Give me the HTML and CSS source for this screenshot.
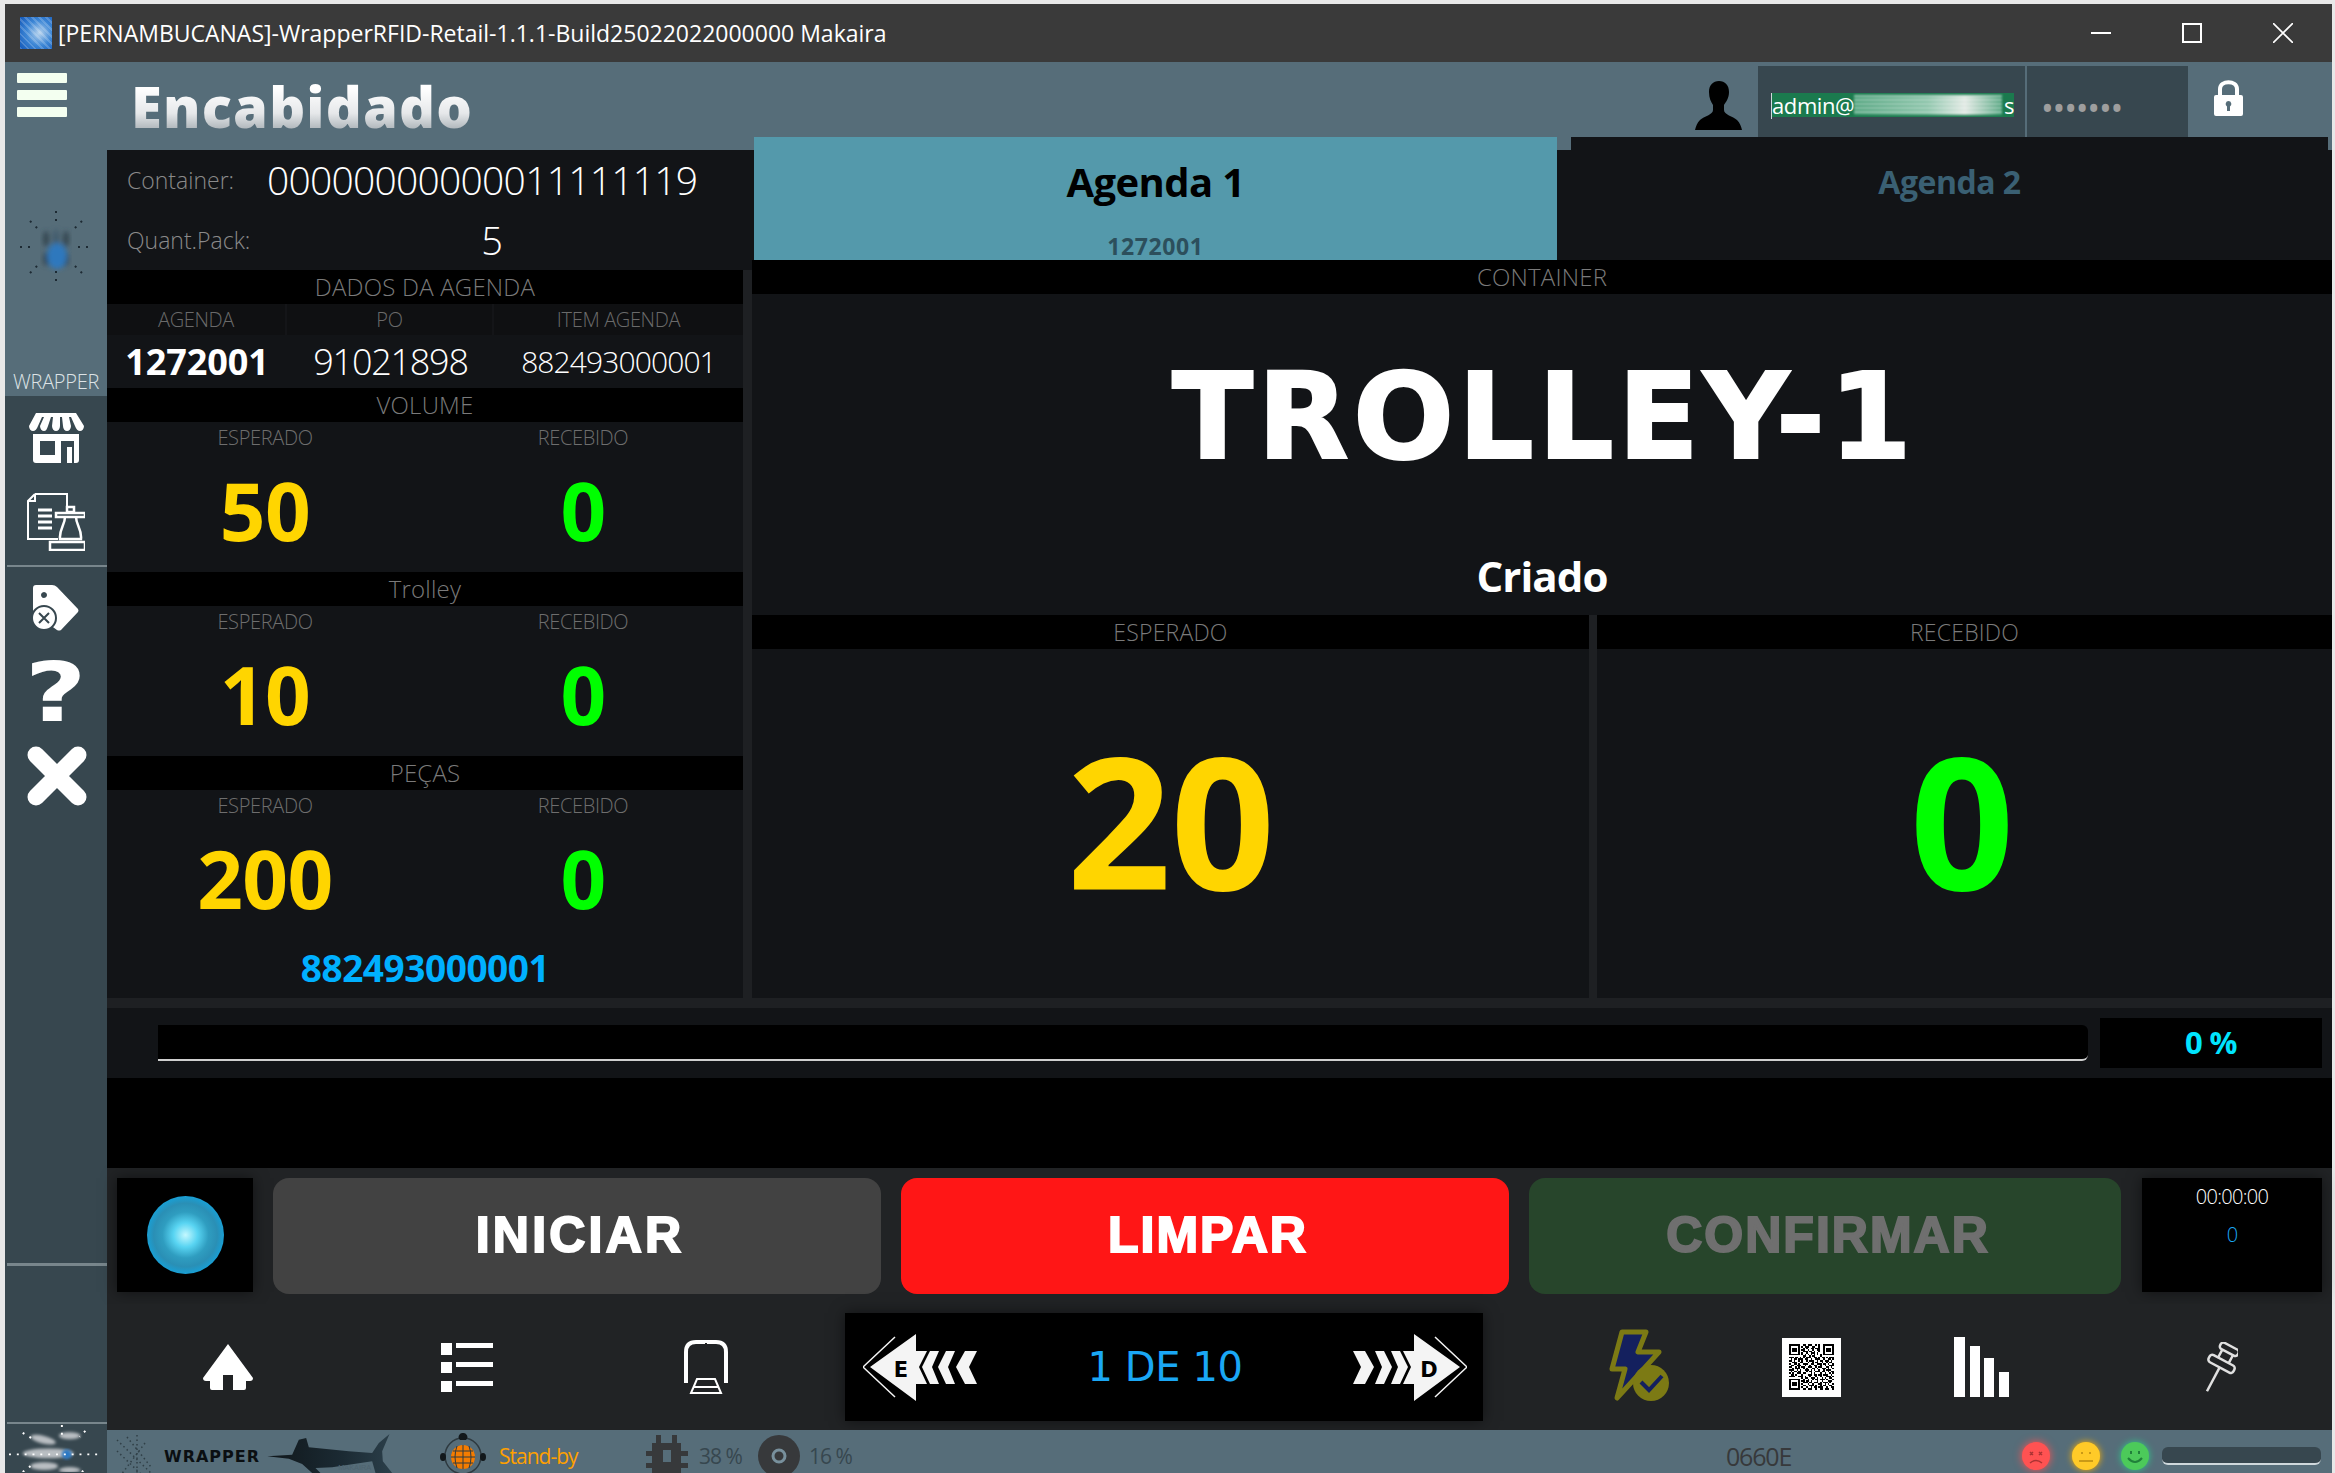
FILE: index.html
```html
<!DOCTYPE html>
<html lang="en">

<head>
    <meta charset="UTF-8">
    <title>[PERNAMBUCANAS]-WrapperRFID-Retail-1.1.1-Build25022022000000 Makaira</title>
    <link rel="stylesheet" href="styles.css">
</head>

<body>
    <div class="window">
        <header class="titlebar">
            <span class="app-icon"></span>
            <span class="title-text">[PERNAMBUCANAS]-WrapperRFID-Retail-1.1.1-Build25022022000000 Makaira</span>
            <div class="win-controls">
                <svg viewBox="0 0 20 20" width="20" height="20"><path d="M0 10h20" stroke="#fff" stroke-width="2"/></svg>
                <svg viewBox="0 0 20 20" width="20" height="20"><rect x="1" y="1" width="18" height="18" fill="none" stroke="#fff" stroke-width="2"/></svg>
                <svg viewBox="0 0 20 20" width="20" height="20"><path d="M0 0l20 20M20 0L0 20" stroke="#fff" stroke-width="1.6"/></svg>
            </div>
        </header>

        <div class="app">
            <aside class="sidebar">
                <div class="side-top">
                    <div class="burger"><span></span><span></span><span></span></div>
                    <svg class="side-logo" viewBox="-40 -40 80 80" width="80" height="80">
                        <defs>
                            <filter id="logoBlur"><feGaussianBlur stdDeviation="2.5"/></filter>
                        </defs>
                        <g filter="url(#logoBlur)">
                            <ellipse cx="-10" cy="-8" rx="3" ry="8" fill="#33454f"/>
                            <ellipse cx="10" cy="-8" rx="3" ry="8" fill="#33454f"/>
                            <ellipse cx="-10" cy="12" rx="3" ry="7" fill="#33454f"/>
                            <ellipse cx="10" cy="12" rx="3" ry="7" fill="#33454f"/>
                            <ellipse cx="0" cy="-8" rx="3" ry="10" fill="#3f5a6c"/>
                            <ellipse cx="1" cy="9" rx="10" ry="13" fill="#2f78bd"/>
                        </g>
                        <g stroke="#1d2a33" stroke-width="2" stroke-dasharray="2 6" fill="none">
                            <path d="M0-36V-22M0 24V36M-36 0H-22M22 0H36M-26-26L-18-18M26-26L18-18M-26 26L-18 18M26 26L18 18"/>
                        </g>
                    </svg>
                    <div class="side-label">WRAPPER</div>
                </div>
                <div class="side-bottom">
                    <svg class="icon-store" viewBox="0 0 56 50" width="56" height="50">
                        <path fill="#fff" d="M8 0h40l8 13c0 3-2 5-4 5s-4-2-5-5l-4-9h-2l2 9c0 3-2 5-4 5s-4-2-4-5l-1-9h-2v9c0 3-2 5-4 5s-4-2-4-5l1-9h-2l-3 9c-1 3-2 5-4 5s-4-2-4-5l4-9h-2l-4 9c-1 3-3 5-5 5s-4-2-4-5z"/>
                        <path fill="#fff" fill-rule="evenodd" d="M5 21h46v26q0 3-3 3H8q-3 0-3-3zM12 28v14h15V28zM33 28v22h6V34h5v16h2V28z"/>
                    </svg>
                    <svg class="icon-doc" viewBox="0 0 58 58" width="58" height="58" fill="none" stroke="#fff" stroke-width="2">
                        <path d="M8 1h32v14M8 1L1 8v38h30M1 8h7V1"/>
                        <path stroke-width="3" d="M11 17h14M11 23h14M11 29h14M11 35h14"/>
                        <path stroke-width="2.5" d="M40 14h7v5h-7zM29 20h29v4H29zM38 24h11c0 8 6 12 5 22H33c-1-10 5-14 5-22zM23 49h35v8H23z"/>
                    </svg>
                    <hr class="side-rule side-rule-a">
                    <svg class="icon-tag" viewBox="0 0 46 46" width="46" height="46">
                        <path fill="#fff" fill-rule="evenodd" d="M3 0h16q3 0 5 2l21 22q1 2 0 3L28 45q-2 1-4 0L3 30q-3-2-3-5V3q0-3 3-3zM11 7a3 3 0 1 0 .01 0z"/>
                        <circle cx="11" cy="33" r="12" fill="#fff" stroke="#37474f" stroke-width="2"/>
                        <path d="M6 28l10 10M16 28L6 38" stroke="#37474f" stroke-width="2"/>
                    </svg>
                    <div class="icon-help">?</div>
                    <svg class="icon-close" viewBox="0 0 60 60" width="60" height="60"><path d="M9 9l42 42M51 9L9 51" stroke="#fff" stroke-width="17" stroke-linecap="round"/></svg>
                    <hr class="side-rule side-rule-b">
                    <hr class="side-rule side-rule-c">
                    <svg class="side-logo-small" viewBox="-50 -24 100 48" width="102" height="47">
                        <defs>
                            <filter id="soft"><feGaussianBlur stdDeviation="1.6"/></filter>
                        </defs>
                        <g fill="#b9bec2" filter="url(#soft)">
                            <ellipse cx="-8" cy="5" rx="26" ry="5"/>
                            <ellipse cx="-13" cy="-9" rx="13" ry="4" transform="rotate(14 -13 -9)"/>
                            <ellipse cx="14" cy="-13" rx="11" ry="3.500"/>
                            <ellipse cx="-12" cy="18" rx="14" ry="4"/>
                            <ellipse cx="14" cy="22" rx="11" ry="3"/>
                        </g>
                        <circle cx="11" cy="6" r="5" fill="#2a78c4" filter="url(#soft)"/>
                        <g stroke="#fff" stroke-width="2" stroke-dasharray="2 6" fill="none">
                            <path d="M-48 6H48M6-24V-14M-34-16L-24-10M30-18L24-12M-34 24L-26 18M28 24L22 20"/>
                        </g>
                    </svg>
                </div>
            </aside>

            <div class="workspace">
                <div class="head-bar">
                    <h1 class="head-title">Encabidado</h1>
                    <svg class="icon-user" viewBox="0 0 47 49" width="47" height="49">
                        <path d="M24 0c6 0 10 4 10 11 0 6-3 10-5 13v5c0 5 9 6 13 10 3 3 4 6 5 10H0c1-4 2-7 5-10 4-4 13-5 13-10v-5c-2-3-4-7-4-13C14 4 18 0 24 0z"/>
                    </svg>
                    <div class="login-box login-user">
                        <span class="caret"></span><span class="selected">admin@<span class="smudge"></span>s</span>
                    </div>
                    <div class="login-box login-pass">•••••••</div>
                    <svg class="icon-lock" viewBox="0 0 29 36" width="29" height="36">
                        <path fill="none" stroke="#fff" stroke-width="4" d="M6 17V9c0-9 17-9 17 0v8"/>
                        <path fill="#fff" fill-rule="evenodd" d="M2 15h25q2 0 2 2v17q0 2-2 2H2q-2 0-2-2V17q0-2 2-2zM14.500 21a3 3 0 0 0-1.500 5.500V31h3v-4.500A3 3 0 0 0 14.500 21z"/>
                    </svg>
                </div>

                <div class="content">
                    <section class="left-panel">
                        <div class="info-row">
                            <span class="info-label">Container:</span>
                            <span class="info-code">00000000000011111119</span>
                        </div>
                        <div class="info-row">
                            <span class="info-label">Quant.Pack:</span>
                            <span class="info-qty">5</span>
                        </div>

                        <div class="band">DADOS DA AGENDA</div>
                        <div class="agenda-grid">
                            <div class="agenda-head">AGENDA</div>
                            <div class="agenda-head">PO</div>
                            <div class="agenda-head">ITEM AGENDA</div>
                            <div class="agenda-val agenda-strong">1272001</div>
                            <div class="agenda-val">91021898</div>
                            <div class="agenda-val agenda-small">882493000001</div>
                        </div>

                        <div class="band">VOLUME</div>
                        <div class="stats">
                            <div class="stat-label">ESPERADO</div>
                            <div class="stat-label">RECEBIDO</div>
                            <div class="stat-val yellow">50</div>
                            <div class="stat-val green">0</div>
                        </div>

                        <div class="band">Trolley</div>
                        <div class="stats">
                            <div class="stat-label">ESPERADO</div>
                            <div class="stat-label">RECEBIDO</div>
                            <div class="stat-val yellow">10</div>
                            <div class="stat-val green">0</div>
                        </div>

                        <div class="band">PEÇAS</div>
                        <div class="stats">
                            <div class="stat-label">ESPERADO</div>
                            <div class="stat-label">RECEBIDO</div>
                            <div class="stat-val yellow">200</div>
                            <div class="stat-val green">0</div>
                        </div>
                        <div class="item-code">882493000001</div>
                    </section>

                    <section class="right-panel">
                        <div class="tabs">
                            <div class="tab tab-active">
                                <div class="tab-name">Agenda 1</div>
                                <div class="tab-sub">1272001</div>
                            </div>
                            <div class="tab tab-idle">
                                <div class="tab-name">Agenda 2</div>
                            </div>
                        </div>
                        <div class="band">CONTAINER</div>
                        <div class="trolley">
                            <div class="trolley-name">TROLLEY-1</div>
                            <div class="trolley-state">Criado</div>
                        </div>
                        <div class="totals">
                            <div class="total">
                                <div class="band">ESPERADO</div>
                                <div class="total-val yellow">20</div>
                            </div>
                            <div class="total">
                                <div class="band">RECEBIDO</div>
                                <div class="total-val green">0</div>
                            </div>
                        </div>
                    </section>
                </div>

                <div class="progress-row">
                    <div class="progress-bar"></div>
                    <div class="progress-pct">0 %</div>
                </div>
                <div class="black-gap"></div>

                <div class="actions">
                    <div class="orb-box"><span class="orb"></span></div>
                    <button class="action action-start">INICIAR</button>
                    <button class="action action-clear">LIMPAR</button>
                    <button class="action action-confirm">CONFIRMAR</button>
                    <div class="timer">
                        <div class="timer-time">00:00:00</div>
                        <div class="timer-count">0</div>
                    </div>
                </div>

                <nav class="nav">
                    <svg class="nav-home" viewBox="0 0 50 46" width="50" height="46">
                        <path fill="#fff" d="M25 0l25 34q0 3-3 3h-4v7q0 2-2 2H30V31H20v15H9q-2 0-2-2v-7H3q-3 0-3-3z"/>
                    </svg>
                    <svg class="nav-list" viewBox="0 0 52 49" width="52" height="49" fill="#fff">
                        <path d="M0 0h11v12H0zM0 19h11v11H0zM0 38h11v11H0zM15 0h37v5H15zM15 19h37v5H15zM15 38h37v5H15z"/>
                    </svg>
                    <svg class="nav-reader" viewBox="0 0 44 54" width="44" height="54" fill="none" stroke="#fff">
                        <path stroke-width="4" d="M2 43V12q0-10 10-10h20q10 0 10 10v31"/>
                        <path stroke-width="2" d="M7 53h30l-6-14H13zM10 47h24"/>
                        <path stroke-width="2" d="M22 3v2" stroke="#212325"/>
                    </svg>
                    <div class="pager">
                        <svg class="arrow" viewBox="0 0 114 67" width="114" height="67">
                            <defs>
                                <g id="arrowShape" fill="#f4f4f4">
                                    <path d="M7 33L53 0v17h11l-8 16 8 17H53v17z"/>
                                    <path d="M0 33L32 3M0 33l32 30" stroke="#f4f4f4" stroke-width="1.500" fill="none"/>
                                    <path d="M67 17h9l-7 16 7 17h-9l-8-17z"/>
                                    <path d="M83 17h9l-7 16 7 17h-9l-8-17z"/>
                                    <path d="M102 17h12l-8 16 8 17h-12l-9-17z"/>
                                </g>
                            </defs>
                            <use href="#arrowShape"/>
                            <text x="38" y="43" text-anchor="middle" class="arrow-letter">E</text>
                        </svg>
                        <span class="pager-text">1 DE 10</span>
                        <svg class="arrow" viewBox="0 0 114 67" width="114" height="67">
                            <use href="#arrowShape" transform="translate(114 0) scale(-1 1)"/>
                            <text x="76" y="43" text-anchor="middle" class="arrow-letter">D</text>
                        </svg>
                    </div>
                    <svg class="nav-bolt" viewBox="0 0 70 80" width="70" height="80">
                        <path fill="#14205e" stroke="#7c7a14" stroke-width="5" stroke-linejoin="round" d="M16 5h24l-8 20h21L33 47l-22 24 8-29H6z"/>
                        <circle cx="45" cy="56" r="18" fill="#7c7a14"/>
                        <path d="M35 55l8 8 13-14" fill="none" stroke="#14205e" stroke-width="4"/>
                    </svg>
                    <svg class="nav-qr" viewBox="0 0 38 38" width="59" height="60" shape-rendering="crispEdges">
                        <rect width="38" height="38" fill="#fff"/>
                        <g transform="translate(4.500 4.500)" fill="none" stroke="#000">
                            <rect x=".5" y=".5" width="6" height="6"/>
                            <rect x="22.500" y=".5" width="6" height="6"/>
                            <rect x=".5" y="22.500" width="6" height="6"/>
                            <g fill="#000">
                                <rect x="2.500" y="2.500" width="2" height="2"/>
                                <rect x="24.500" y="2.500" width="2" height="2"/>
                                <rect x="2.500" y="24.500" width="2" height="2"/>
                            </g>
                            <path transform="translate(0 .5)" d="M9 0h2M12 0h3M17 0h1M19 0h1M8 1h1M10 1h3M15 1h2M19 1h1M9 2h1M11 2h1M14 2h2M17 2h3M8 3h2M12 3h1M15 3h1M18 3h2M9 4h3M13 4h2M16 4h1M19 4h1M8 5h1M11 5h1M14 5h3M18 5h1M8 6h1M10 6h1M12 6h1M14 6h1M16 6h1M18 6h1M20 6h1M9 7h2M13 7h1M15 7h2M20 7h1M0 8h3M4 8h2M7 8h1M9 8h1M11 8h3M16 8h2M19 8h1M21 8h2M24 8h1M26 8h3M1 9h1M3 9h2M6 9h3M10 9h2M14 9h1M17 9h3M22 9h1M25 9h2M28 9h1M0 10h2M3 10h1M6 10h1M8 10h1M11 10h1M13 10h3M18 10h1M20 10h2M23 10h3M27 10h1M2 11h3M7 11h2M12 11h1M15 11h1M17 11h2M21 11h1M24 11h1M26 11h2M0 12h1M3 12h2M6 12h1M9 12h3M14 12h2M18 12h3M22 12h2M25 12h1M28 12h1M1 13h2M5 13h3M10 13h1M13 13h1M16 13h2M20 13h1M23 13h1M26 13h3M0 14h2M4 14h1M6 14h1M8 14h2M12 14h3M17 14h1M19 14h2M24 14h2M27 14h1M2 15h1M4 15h3M9 15h1M11 15h1M15 15h2M18 15h1M21 15h3M25 15h1M28 15h1M0 16h3M5 16h1M7 16h1M10 16h3M14 16h1M16 16h1M19 16h1M22 16h1M24 16h3M1 17h1M3 17h2M6 17h2M11 17h1M13 17h2M17 17h3M21 17h2M25 17h1M27 17h2M0 18h1M2 18h1M5 18h3M9 18h2M14 18h1M16 18h1M20 18h1M23 18h1M26 18h1M28 18h1M1 19h2M4 19h1M8 19h1M12 19h3M16 19h2M19 19h2M22 19h3M27 19h1M0 20h3M3 20h1M6 20h3M10 20h1M13 20h1M17 20h1M20 20h1M24 20h3M28 20h1M8 21h1M10 21h2M14 21h3M18 21h1M21 21h1M23 21h1M26 21h2M9 22h1M12 22h1M15 22h1M17 22h2M20 22h3M24 22h1M28 22h1M8 23h2M11 23h2M14 23h1M18 23h1M21 23h1M25 23h2M27 23h1M9 24h3M13 24h2M16 24h3M20 24h1M22 24h3M26 24h1M8 25h1M12 25h1M15 25h1M19 25h2M23 25h1M25 25h1M28 25h1M9 26h2M13 26h3M17 26h1M20 26h1M22 26h2M26 26h2M8 27h1M11 27h1M14 27h1M16 27h2M19 27h3M24 27h1M27 27h2M9 28h2M12 28h3M17 28h1M20 28h2M23 28h3M28 28h1"/>
                        </g>
                    </svg>
                    <div class="nav-bars">
                        <span class="bar bar-1"></span><span class="bar bar-2"></span><span class="bar bar-3"></span><span class="bar bar-4"></span>
                    </div>
                    <svg class="nav-pin" viewBox="0 0 38 50" width="38" height="50" fill="none" stroke="#e0e0e0" stroke-width="2.500" stroke-linejoin="round">
                        <g transform="translate(22 21) rotate(28)">
                            <rect x="-10" y="-19" width="20" height="7" rx="3"/>
                            <path d="M-6-12V-3M6-12V-3"/>
                            <rect x="-14" y="-3" width="28" height="8" rx="3"/>
                            <path d="M0 5V32"/>
                        </g>
                    </svg>
                </nav>

                <footer class="statusbar">
                    <svg class="st-scatter" viewBox="0 0 40 43" width="40" height="43" stroke="#27343b" stroke-width="1.500" stroke-dasharray="1.500 3" fill="none">
                        <path d="M2 5L38 40M12 2L36 32M2 16L30 43M22 0V43M30 8L6 40" opacity=".8"/>
                    </svg>
                    <span class="st-brand">WRAPPER</span>
                    <svg class="st-fish" viewBox="455 6 380 129" width="127" height="43">
                        <defs>
                            <linearGradient id="fishFill" x1="0" y1="0" x2="1" y2="0">
                                <stop offset="0" stop-color="#10171b"/>
                                <stop offset="0.6" stop-color="#1b2a33"/>
                                <stop offset="1" stop-color="#2b3f4a"/>
                            </linearGradient>
                        </defs>
                        <path fill="url(#fishFill)" d="M455 85L530 80L550 35L572 30L580 58L700 70L770 75L790 45L822 18L800 70L802 100L830 135H780L770 100L700 110L650 118L600 120L615 135H590L560 108L520 92Z"/>
                        <text x="668" y="125" class="fish-label">MAKAIRA</text>
                    </svg>
                    <svg class="st-globe" viewBox="0 0 46 46" width="46" height="46">
                        <circle cx="23" cy="23" r="18" fill="none" stroke="#2e3a40" stroke-width="1.500"/>
                        <circle cx="23" cy="24" r="12" fill="#f57c00"/>
                        <path d="M11 24h24M13 18h20M13 30h20M23 12v24M17 13q-4 11 0 22M29 13q4 11 0 22" stroke="#2e3a40" stroke-width="1" fill="none"/>
                        <path fill="#12181b" d="M23 0a4 4 0 0 1 3 7h-6a4 4 0 0 1 3-7zM0 24a3 4 0 0 1 6 0 3 4 0 0 1-6 0zM40 24a3 4 0 0 1 6 0 3 4 0 0 1-6 0zM20 40h6v6h-6z"/>
                    </svg>
                    <span class="st-state">Stand-by</span>
                    <svg class="st-chip" viewBox="0 0 42 43" width="42" height="43" fill="#37393b">
                        <path d="M10 0h5v8h11V0h5v8h4v8h7v5h-7v7h7v5h-7v6h-4v4h-5v-4H15v4h-5v-4H6v-6H0v-5h6v-7H0v-5h6V8h4zM17 15v12h8V15z" fill-rule="evenodd"/>
                    </svg>
                    <span class="st-pct st-pct-a">38 %</span>
                    <svg class="st-disc" viewBox="0 0 42 42" width="42" height="42">
                        <circle cx="21" cy="21" r="21" fill="#37393b"/>
                        <circle cx="21" cy="21" r="6" fill="none" stroke="#78909c" stroke-width="3"/>
                    </svg>
                    <span class="st-pct st-pct-b">16 %</span>
                    <span class="st-code">0660E</span>
                    <div class="face face-red">
                        <svg viewBox="0 0 28 28" width="28" height="28" fill="none" stroke="#a33" stroke-width="1.500"><path d="M8 10l3 3M11 10l-3 3M17 10l3 3M20 10l-3 3M8 21q6-5 12 0"/></svg>
                    </div>
                    <div class="face face-yellow">
                        <svg viewBox="0 0 28 28" width="28" height="28" fill="none" stroke="#b98a10" stroke-width="1.500"><path d="M10 10v2M18 10v2M7 19h14"/></svg>
                    </div>
                    <div class="face face-green">
                        <svg viewBox="0 0 28 28" width="28" height="28" fill="none" stroke="#20803a" stroke-width="2"><path d="M10 9v3M18 9v3M7 16q7 8 14 0"/></svg>
                    </div>
                    <div class="st-meter"></div>
                </footer>
            </div>
        </div>
    </div>
</body>

</html>
```

FILE: styles.css
```css
*,
*::before,
*::after {
    box-sizing: border-box;
}

body {
    margin: 0;
    padding: 4px 3px 0 5px;
    height: 1473px;
    overflow: hidden;
    background: #e8e8e8;
    font-family: "Open Sans", sans-serif;
}

.window {
    height: 1469px;
    display: flex;
    flex-direction: column;
    background: #1e2023;
}

/* title bar */
.titlebar {
    height: 58px;
    flex: none;
    display: flex;
    align-items: center;
    padding-left: 15px;
    background: #3a3a3a;
    color: #fff;
}

.app-icon {
    width: 32px;
    height: 32px;
    margin-right: 6px;
    background:
        repeating-linear-gradient(45deg, rgba(255, 255, 255, 0.18) 0 2px, transparent 2px 5px),
        radial-gradient(circle at 60% 50%, #b8d4ee 0, #3d87d6 50%, #1257b8 100%);
}

.title-text {
    font-size: 23px;
    white-space: nowrap;
}

.win-controls {
    margin-left: auto;
    margin-right: 39px;
    display: flex;
    gap: 71px;
}

/* layout */
.app {
    flex: 1;
    display: flex;
    min-height: 0;
}

.sidebar {
    width: 102px;
    flex: none;
    display: flex;
    flex-direction: column;
}

.side-top {
    height: 334px;
    background: #566d79;
    padding-top: 11px;
    display: flex;
    flex-direction: column;
    align-items: center;
}

.burger {
    width: 50px;
    margin-left: -14px;
    align-self: center;
    margin-right: 14px;
    display: flex;
    flex-direction: column;
    gap: 7px;
}

.burger span {
    height: 10px;
    background: #f3fff0;
    border-radius: 1px;
}

.side-logo {
    margin-top: 90px;
}

.side-label {
    margin-top: 81px;
    font-size: 20px;
    font-weight: 300;
    letter-spacing: -0.3px;
    color: #dde3e6;
    line-height: 28px;
}

.side-bottom {
    flex: 1;
    background: #37474f;
    display: flex;
    flex-direction: column;
    align-items: center;
}

.icon-store {
    margin-top: 17px;
}

.icon-doc {
    margin-top: 30px;
}

.side-rule {
    border: 0;
    margin: 0;
    background: #78868c;
    height: 2px;
    width: 100px;
    align-self: flex-end;
}

.side-rule-a {
    margin-top: 14px;
}

.icon-tag {
    margin-top: 18px;
}

.icon-help {
    margin-top: 32px;
    height: 59px;
    font-family: "DejaVu Sans", sans-serif;
    font-weight: 700;
    font-size: 82px;
    line-height: 59px;
    color: #fff;
    transform: scaleX(1.3);
}

.icon-close {
    margin: 24px 0 0 2px;
}

.side-rule-b {
    height: 3px;
    margin-top: 457px;
}

.side-rule-c {
    margin-top: 156px;
}

.side-logo-small {
    margin-top: 1px;
}

.workspace {
    flex: 1;
    min-width: 0;
    display: flex;
    flex-direction: column;
}

/* header */
.head-bar {
    height: 88px;
    flex: none;
    display: flex;
    align-items: flex-start;
    background: #566d79;
    padding-right: 89px;
}

.head-title {
    margin: 8px 0 0 24px;
    font-size: 56px;
    line-height: 72px;
    font-weight: 800;
    letter-spacing: 1.2px;
    background: linear-gradient(180deg, #fff 25%, #e6e8ea 60%, #a8b0b5 85%);
    -webkit-background-clip: text;
    background-clip: text;
    color: transparent;
}

.icon-user {
    margin: 19px 0 0 auto;
}

.login-box {
    height: 71px;
    margin-top: 4px;
    background: #37474f;
}

.login-user {
    width: 267px;
    margin-left: 16px;
    padding: 27px 0 0 13px;
    display: flex;
    align-items: flex-start;
}

.caret {
    width: 1px;
    height: 26px;
    background: #cfd8dc;
    flex: none;
}

.selected {
    width: 242px;
    height: 24px;
    display: flex;
    align-items: center;
    background: #1b7a4e;
    color: #fff;
    font-size: 22px;
    line-height: 24px;
    letter-spacing: -0.4px;
}

.smudge {
    flex: 1;
    height: 20px;
    margin: 0 2px 0 0;
    background:
        repeating-linear-gradient(180deg, rgba(255, 255, 255, 0.45) 0 2px, transparent 2px 4px),
        linear-gradient(90deg, #3f9a70 0, #7cbc9e 50%, #dde6e0 75%, #3f9a70 100%);
    filter: blur(1px);
}

.login-pass {
    width: 161px;
    margin-left: 2px;
    padding: 24px 0 0 14px;
    font-size: 34px;
    line-height: 36px;
    letter-spacing: -1.2px;
    color: #9e9e9e;
}

.icon-lock {
    margin: 18px 0 0 26px;
}

/* content */
.content {
    height: 848px;
    flex: none;
    display: flex;
    gap: 9px;
}

.left-panel {
    width: 636px;
    flex: none;
    background: #121417;
}

.info-row {
    width: 645px;
    height: 60px;
    display: flex;
    align-items: center;
    background: #121417;
    padding-left: 20px;
    color: #fff;
}

.info-label {
    width: 140px;
    flex: none;
    font-size: 23px;
    font-weight: 300;
    color: #8a8a8a;
}

.info-code {
    margin-top: -2px;
    font-size: 39px;
    font-weight: 300;
    letter-spacing: -0.75px;
}

.info-qty {
    width: 450px;
    text-align: center;
    font-size: 38px;
    font-weight: 300;
}

.band {
    height: 34px;
    line-height: 34px;
    background: #000;
    text-align: center;
    font-size: 24px;
    font-weight: 300;
    letter-spacing: 0.2px;
    color: #7a7a7a;
}

.agenda-grid {
    display: grid;
    grid-template-columns: 180px 207px 249px;
    grid-template-rows: 31px 53px;
}

.agenda-head {
    display: flex;
    align-items: center;
    justify-content: center;
    font-size: 20px;
    font-weight: 300;
    letter-spacing: -0.35px;
    color: #6a6a6a;
    background: #0f1012;
    border-right: 2px solid #141518;
}

.agenda-head:nth-child(3) {
    border-right: 0;
}

.agenda-val {
    display: flex;
    align-items: center;
    justify-content: center;
    font-size: 36px;
    font-weight: 300;
    letter-spacing: -1.25px;
    color: #fff;
}

.agenda-strong {
    font-weight: 700;
    letter-spacing: -0.1px;
}

.agenda-small {
    font-size: 30px;
    letter-spacing: -0.9px;
}

.stats {
    display: grid;
    grid-template-columns: 316px 320px;
    grid-template-rows: 30px 120px;
}

.stat-label {
    display: flex;
    align-items: center;
    justify-content: center;
    font-size: 20px;
    font-weight: 300;
    letter-spacing: -0.35px;
    color: #6e6e6e;
}

.stat-val {
    text-align: center;
    font-size: 80px;
    line-height: 116px;
    font-weight: 700;
    letter-spacing: -0.5px;
}

.yellow {
    color: #ffd500;
}

.green {
    color: #00ff00;
}

.item-code {
    height: 58px;
    line-height: 56px;
    text-align: center;
    font-size: 37px;
    font-weight: 700;
    letter-spacing: -0.45px;
    color: #00b0ff;
}

.right-panel {
    flex: 1;
    min-width: 0;
    display: flex;
    flex-direction: column;
    margin-top: -13px;
}

.tabs {
    height: 123px;
    flex: none;
    display: flex;
    gap: 14px;
    padding-left: 2px;
    background: linear-gradient(180deg, transparent 13px, #121417 13px);
}

.tab {
    display: flex;
    flex-direction: column;
    align-items: center;
    font-weight: 700;
}

.tab-active {
    width: 803px;
    background: #5499ab;
    color: #000;
}

.tab-idle {
    width: 757px;
    background: #121417;
    color: #3a6073;
}

.tab-name {
    margin-top: 19px;
    line-height: 52px;
}

.tab-active .tab-name {
    font-size: 40px;
    letter-spacing: -0.6px;
}

.tab-idle .tab-name {
    font-size: 32px;
    letter-spacing: -0.5px;
}

.tab-sub {
    margin-top: 23px;
    font-size: 23px;
    line-height: 30px;
    font-weight: 700;
    letter-spacing: 0.6px;
    color: #2c4f5c;
}

.trolley {
    height: 321px;
    flex: none;
    background: #121417;
    text-align: center;
    color: #fff;
}

.trolley-name {
    padding: 62px 0 0 4px;
    font-family: "DejaVu Sans", sans-serif;
    font-size: 119px;
    line-height: 122px;
    font-weight: 700;
    letter-spacing: 4px;
    -webkit-text-stroke: 2px #fff;
}

.trolley-state {
    margin-top: 68px;
    font-size: 42px;
    line-height: 60px;
    font-weight: 700;
    letter-spacing: -0.9px;
}

.totals {
    flex: 1;
    display: flex;
    gap: 8px;
}

.total {
    display: flex;
    flex-direction: column;
    background: #121417;
}

.total:first-child {
    width: 837px;
}

.total:last-child {
    width: 735px;
}

.total .band {
    font-size: 23px;
}

.total-val {
    flex: 1;
    display: flex;
    align-items: center;
    justify-content: center;
    padding-bottom: 10px;
    font-size: 183px;
    line-height: 186px;
    font-weight: 700;
    letter-spacing: -1px;
}

.total-val.green {
    padding-right: 6px;
}

/* progress */
.progress-row {
    height: 80px;
    flex: none;
    display: flex;
    align-items: center;
    padding: 10px 0 0 51px;
    background: linear-gradient(180deg, #1e2023 10px, #121417 10px);
}

.progress-bar {
    width: 1930px;
    height: 36px;
    background: #000;
    border-bottom: 2px solid #cfcfcf;
    border-radius: 0 6px 6px 0;
}

.progress-pct {
    width: 222px;
    height: 50px;
    margin-left: 12px;
    background: #000;
    color: #00e5ff;
    text-align: center;
    font-size: 31px;
    line-height: 48px;
    font-weight: 700;
    letter-spacing: -0.6px;
}

.black-gap {
    height: 90px;
    flex: none;
    background: #000;
}

/* action buttons */
.actions {
    height: 136px;
    flex: none;
    display: flex;
    align-items: flex-start;
    padding: 10px 0 0 10px;
    background: #212325;
}

.orb-box {
    width: 136px;
    height: 114px;
    display: flex;
    align-items: center;
    justify-content: center;
    background: #000;
    box-shadow: 0 0 14px rgba(0, 0, 0, 0.5);
}

.orb {
    width: 77px;
    height: 78px;
    border-radius: 50%;
    background: radial-gradient(circle, #c4f8ff 0, #58d4f2 22%, #2f9dc0 42%, #2a8fb5 58%, #12a6e2 76%, #0f86c4 90%, #0a5f96 100%);
}

.action {
    height: 116px;
    margin-left: 20px;
    border: 0;
    border-radius: 16px;
    font-family: "Liberation Sans", sans-serif;
    font-size: 50px;
    font-weight: 700;
    -webkit-text-stroke: 2px currentColor;
    letter-spacing: 2px;
    padding: 0 0 2px 6px;
}

.action-start {
    width: 608px;
    background: #424242;
    color: #fff;
    letter-spacing: 3.2px;
}

.action-clear {
    width: 608px;
    background: #ff1616;
    color: #fff;
}

.action-confirm {
    width: 592px;
    background: #27452b;
    color: #6f6f6f;
}

.timer {
    width: 180px;
    height: 114px;
    margin-left: 21px;
    background: #000;
    text-align: center;
    font-size: 20px;
    font-weight: 300;
    letter-spacing: -0.7px;
    box-shadow: 0 0 14px rgba(0, 0, 0, 0.5);
}

.timer-time {
    margin-top: 5px;
    line-height: 28px;
    color: #fff;
}

.timer-count {
    margin-top: 10px;
    line-height: 28px;
    color: #1aa7f5;
}

/* icon navigation */
.nav {
    height: 126px;
    flex: none;
    display: flex;
    align-items: center;
    background: #212325;
}

.nav-home {
    margin-left: 96px;
}

.nav-list {
    margin-left: 188px;
}

.nav-reader {
    margin-left: 191px;
}

.pager {
    width: 638px;
    height: 108px;
    margin-left: 117px;
    display: flex;
    align-items: center;
    justify-content: space-between;
    padding: 0 16px 0 18px;
    background: #000;
    box-shadow: 0 0 14px rgba(0, 0, 0, 0.5);
}

.arrow-letter {
    font-family: "DejaVu Sans", sans-serif;
    font-size: 21px;
    font-weight: 700;
    fill: #000;
}

.pager-text {
    font-family: "DejaVu Sans", sans-serif;
    font-size: 40px;
    letter-spacing: -0.4px;
    color: #1aa7f5;
}

.nav-bolt {
    margin-left: 123px;
}

.nav-qr {
    margin-left: 106px;
}

.nav-bars {
    margin-left: 113px;
    width: 55px;
    height: 60px;
    display: flex;
    align-items: flex-end;
    justify-content: space-between;
}

.bar {
    width: 10px;
    background: #fff;
}

.bar-1 {
    height: 60px;
    width: 11px;
}

.bar-2 {
    height: 51px;
}

.bar-3 {
    height: 39px;
}

.bar-4 {
    height: 25px;
}

.nav-pin {
    margin-left: 191px;
}

/* status bar */
.statusbar {
    flex: 1;
    min-height: 0;
    display: flex;
    align-items: center;
    overflow: hidden;
    background: #566d79;
    padding: 9px 0 0 8px;
}

.st-scatter {
    flex: none;
}

.st-brand {
    width: 98px;
    margin-left: 9px;
    flex: none;
    font-family: "DejaVu Sans", sans-serif;
    font-size: 16px;
    font-weight: 700;
    letter-spacing: 1px;
    color: #0b0f12;
}

.st-fish {
    flex: none;
    align-self: flex-start;
    margin: -9px 0 0 5px;
}

.fish-label {
    font-family: "Liberation Sans", sans-serif;
    font-size: 22px;
    fill: #4f6470;
}

.st-globe {
    flex: none;
    margin-left: 46px;
}

.st-state {
    width: 147px;
    margin-left: 13px;
    flex: none;
    font-size: 21px;
    letter-spacing: -1px;
    color: #ffa000;
}

.st-chip {
    flex: none;
}

.st-pct {
    width: 56px;
    flex: none;
    font-size: 21px;
    font-weight: 400;
    letter-spacing: -1px;
    color: #37474f;
}

.st-pct-a {
    margin: 0 3px 0 11px;
}

.st-pct-b {
    margin-left: 9px;
}

.st-disc {
    flex: none;
}

.st-code {
    width: 65px;
    margin-left: 861px;
    flex: none;
    text-align: center;
    font-size: 25px;
    font-weight: 400;
    letter-spacing: -1.2px;
    color: #37393b;
}

.face {
    width: 28px;
    height: 28px;
    flex: none;
    border-radius: 50%;
}

.face svg {
    display: block;
}

.face-red {
    margin-left: 231px;
    background: #ff5252;
    box-shadow: 0 0 8px #ff5252;
}

.face-yellow {
    margin-left: 22px;
    background: #ffca28;
    box-shadow: 0 0 7px #ffb300;
}

.face-green {
    margin-left: 21px;
    background: #4cca5a;
    box-shadow: 0 0 7px #2fc88c;
}

.st-meter {
    width: 159px;
    height: 18px;
    margin-left: 13px;
    flex: none;
    border-radius: 6px;
    background: #37474f;
    border-bottom: 2px solid #cfd8dc;
}
```
